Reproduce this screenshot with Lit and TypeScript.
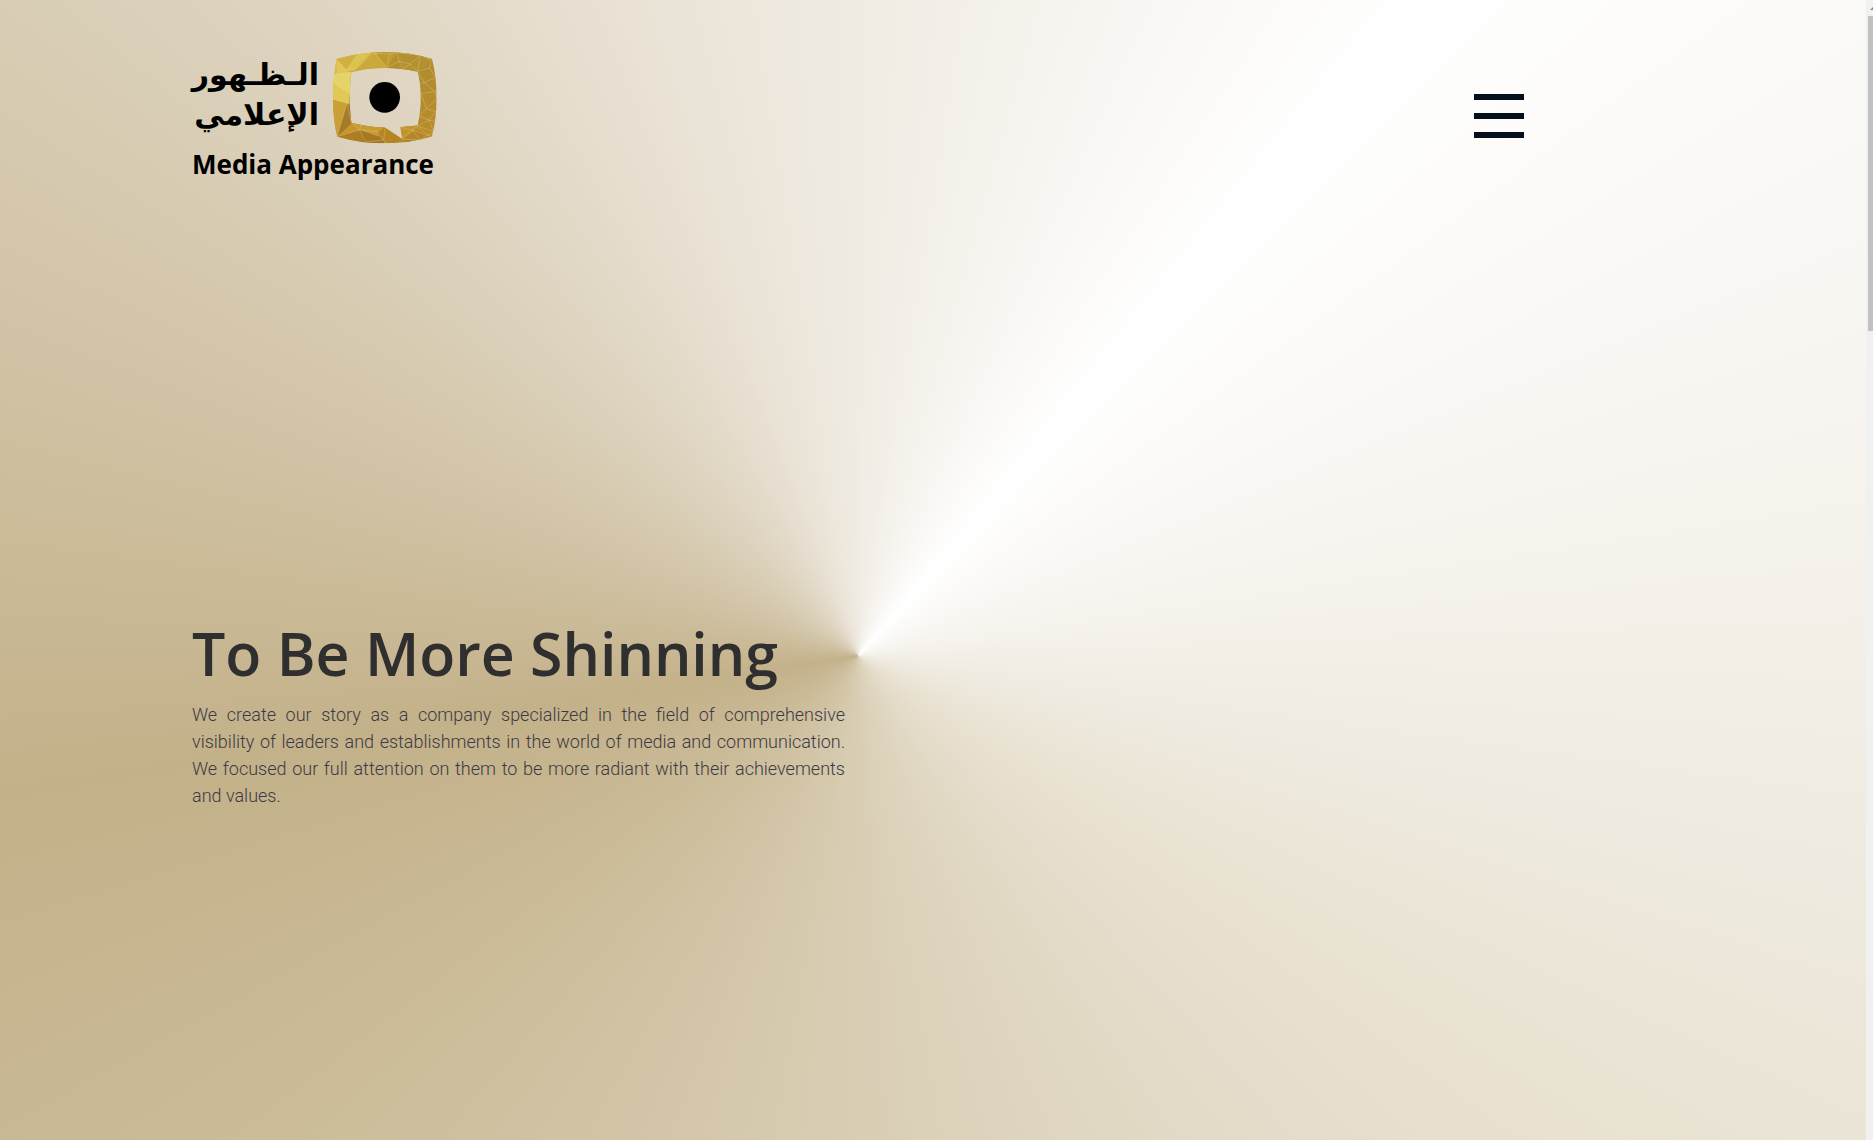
import { LitElement, html, css, svg } from "lit";
import { customElement } from "lit/decorators.js";

const FACETS: [string, string][] = [
  ["30,20 105,90 30,110", "#d9bd45"],
  ["48,57 62,50 112,42 78,90", "#d2b040"],
  ["48,57 78,90 92,100 50,102", "#dfc658"],
  ["112,42 160,36 108,88 78,90", "#dcc24e"],
  ["160,30 205,84 108,88", "#cba938"],
  ["160,30 235,30 200,84", "#be9930"],
  ["235,30 340,50 295,96 200,84", "#b39030"],
  ["36,102 92,97 88,165 36,130", "#e6d367"],
  ["36,130 88,165 86,195 36,178", "#e2c956"],
  ["36,178 80,190 50,290 36,240", "#c9a034"],
  ["80,190 88,195 95,250 50,292", "#a67a2b"],
  ["50,290 95,250 122,254 118,270", "#c3972d"],
  ["50,290 118,270 135,310", "#ad7e24"],
  ["95,248 190,262 170,290 118,270", "#c89c32"],
  ["118,270 190,295 192,315 130,312", "#a67824"],
  ["170,280 195,262 246,297 210,315 190,300", "#b68422"],
  ["240,258 295,258 340,292 246,297", "#c1942d"],
  ["246,297 290,268 335,292 260,312", "#b48628"],
];

const MESH =
  "M49 57L78 90L112 42M78 90L108 88L160 36L200 82M50 102L92 97M46 130L88 165M40 178L80 190L50 290M80 190L93 248" +
  "M50 290L118 270L95 250M118 270L122 254M118 270L135 306L190 300L170 275L118 270M190 300L195 262M190 300L200 312" +
  "M160 40L208 42L230 38L236 64L200 82L208 42M230 38L300 46L270 72L236 64L250 86L270 72L292 94M300 46L332 60L328 84L292 94L300 46" +
  "M328 84L345 112L312 128L292 94M312 128L345 155L302 160M312 128L298 130M345 155L348 178L318 206L302 160M318 206L346 214L326 240L296 228L318 206" +
  "M326 240L346 245M326 240L292 258L340 275L326 240M292 258L275 270L246 297M275 270L242 262M275 270L300 300L340 275M275 270L335 290M246 297L300 300";

@customElement("brand-logo")
export class BrandLogo extends LitElement {
  static styles = css`
    .brand {
      display: inline-flex;
      flex-direction: column;
      color: #000;
      text-decoration: none;
      font-weight: 700;
    }
    .row {
      display: flex;
      gap: 14px;
    }
    .arabic {
      display: flex;
      flex-direction: column;
      width: 127px;
      padding-top: 4px;
      font: 700 30px/40px "DejaVu Sans", "Noto Sans", sans-serif;
      white-space: nowrap;
    }
    .mark {
      display: block;
      flex: none;
      width: 104px;
      height: 93px;
    }
    .latin {
      font: 700 26px/36px "Open Sans", "Noto Sans", sans-serif;
      white-space: nowrap;
      padding-top: 2px;
    }
  `;

  render() {
    return html`
      <a class="brand" href="#home">
        <span class="row">
          <span class="arabic" lang="ar" dir="rtl">
            <span>الـظـهور</span>
            <span>الإعلامي</span>
          </span>
          <svg class="mark" viewBox="38 33 312 279" aria-hidden="true">
            <defs>
              <linearGradient id="gold" x1="0" y1="0" x2="1" y2="1">
                <stop offset="0" stop-color="#dcc04a" />
                <stop offset="0.5" stop-color="#b08c30" />
                <stop offset="1" stop-color="#b88c2a" />
              </linearGradient>
              <clipPath id="frame">
                <path
                  clip-rule="evenodd"
                  d="M49 57Q120 36 195 36Q270 36 335 57Q349 110 349 172Q349 235 335 289Q270 310 195 310Q120 310 51 290Q38 240 38 175Q38 110 49 57Z
                     M93 97Q84 170 93 248Q140 260 192 262L246 297L240 261Q268 260 292 256Q302 210 301 170Q301 130 292 95Q240 84 195 84Q140 84 93 97Z"
                />
              </clipPath>
            </defs>
            <g clip-path="url(#frame)">
              <rect x="36" y="30" width="316" height="284" fill="url(#gold)" />
              ${FACETS.map(([p, c]) => svg`<polygon points=${p} fill=${c} />`)}
              <path d=${MESH} fill="none" stroke="#ead58a" stroke-opacity="0.5" stroke-width="2" />
            </g>
            <circle cx="193" cy="172" r="46" fill="#000" />
          </svg>
        </span>
        <span class="latin">Media Appearance</span>
      </a>
    `;
  }
}

@customElement("app-root")
export class AppRoot extends LitElement {
  static styles = css`
    :host {
      display: flex;
      min-height: 100vh;
      font-family: "Open Sans", "Noto Sans", sans-serif;
    }
    .page {
      flex: 1;
      min-width: 0;
      box-sizing: border-box;
      padding: 51px 342px 0 192px;
      background: conic-gradient(
        from 41deg at 46% 57.5%,
        #ffffff 0deg,
        #f6f3ed 40deg,
        #ebe5d7 74deg,
        #c3b189 220deg,
        #ded4c0 278deg,
        #e9e2d5 299deg,
        #ffffff 360deg
      );
    }
    .header {
      display: flex;
      justify-content: space-between;
      align-items: flex-start;
    }
    .menu {
      display: flex;
      flex-direction: column;
      gap: 13px;
      margin-top: 43px;
      padding: 0;
      border: 0;
      background: none;
      cursor: pointer;
    }
    .bar {
      width: 50px;
      height: 6px;
      background: #04101c;
    }
    .hero {
      width: 653px;
      max-width: 100%;
      padding-top: 431px;
    }
    .title {
      margin: 0;
      font-size: 59px;
      line-height: 80px;
      font-weight: 600;
      color: #2f2f2f;
      white-space: nowrap;
    }
    .copy {
      margin: 8px 0 0;
      font-family: Roboto, "Open Sans", sans-serif;
      font-size: 18px;
      line-height: 27px;
      font-weight: 300;
      color: #3c3a44;
      text-align: justify;
    }
    .line {
      display: block;
      text-align-last: justify;
    }
    .line:last-child {
      text-align-last: start;
    }
    .scroll {
      flex: none;
      width: 7px;
      overflow: hidden;
      background: #f1f1f1;
    }
    .arrow {
      display: block;
      width: 7px;
      height: 16px;
    }
    .thumb {
      height: 315px;
      margin-left: 2px;
      background: #c1c1c1;
    }
  `;

  render() {
    return html`
      <main class="page">
        <header class="header">
          <brand-logo></brand-logo>
          <button class="menu" type="button" aria-label="Menu">
            <span class="bar"></span>
            <span class="bar"></span>
            <span class="bar"></span>
          </button>
        </header>
        <section class="hero">
          <h1 class="title">To Be More Shinning</h1>
          <p class="copy">
            <span class="line">We create our story as a company specialized in the field of comprehensive</span>
            <span class="line">visibility of leaders and establishments in the world of media and communication.</span>
            <span class="line">We focused our full attention on them to be more radiant with their achievements</span>
            <span class="line">and values.</span>
          </p>
        </section>
      </main>
      <div class="scroll" aria-hidden="true">
        <svg class="arrow" viewBox="0 0 7 16"><path d="M4 10L8 6V10Z" fill="#8a8a8a" /></svg>
        <div class="thumb"></div>
      </div>
    `;
  }
}
